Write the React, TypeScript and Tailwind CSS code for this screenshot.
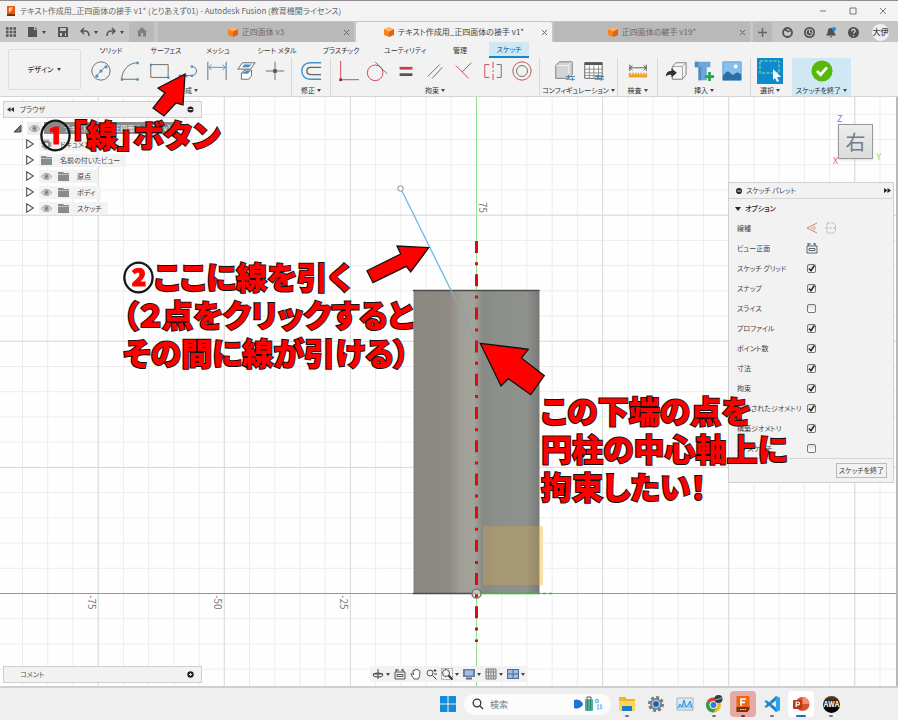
import React from 'react';

type P = { children: React.ReactNode; size?: string; box?: string };
const Svg = ({ children, size = 'size-6', box = '0 0 24 24' }: P) => (
  <svg viewBox={box} className={`${size} shrink-0`} fill="none" aria-hidden="true">{children}</svg>
);
const Caret = () => <span aria-hidden="true" className="ml-0.5 inline-block border-x-2 border-t-3 border-x-transparent border-t-[#444]" />;

/* ---------- title bar ---------- */
const TitleBar = () => (
  <header className="flex h-[21px] items-center border-t border-[#8f8b91] bg-[#f3f3f3] pl-1.5 text-[8px] text-[#666]">
    <Svg size="size-[10px]" box="0 0 10 10">
      <path d="M1 0h8v8l-1 2H1z" fill="#e85d0c" /><path d="M1 8h8v2H1z" fill="#7a2f08" /><path d="M3.7 6V2h3M3.7 4h2.3" stroke="#fff" />
    </Svg>
    <h1 className="ml-1 whitespace-nowrap">テキスト作成用_正四面体の接手 v1* (とりあえず01) - Autodesk Fusion (教育機関ライセンス)</h1>
    <div className="ml-auto flex">
      <button aria-label="最小化" className="flex w-[30px] justify-center"><Svg size="size-2" box="0 0 8 8"><path d="M1 4h6" stroke="#777" /></Svg></button>
      <button aria-label="最大化" className="flex w-[30px] justify-center"><Svg size="size-2" box="0 0 8 8"><path d="M1 1h6v6h-6z" stroke="#777" /></Svg></button>
      <button aria-label="閉じる" className="flex w-[30px] justify-center"><Svg size="size-2" box="0 0 8 8"><path d="m1 1 6 6m0-6-6 6" stroke="#777" /></Svg></button>
    </div>
  </header>
);

/* ---------- document tabs ---------- */
const Cube = () => (
  <Svg size="size-[10px]" box="0 0 10 10">
    <path d="m5 0 5 2-5 2.5L0 2z" fill="#ffb35c" /><path d="M0 2l5 2.5V10L0 8z" fill="#f58220" /><path d="m10 2-5 2.5V10l5-2z" fill="#e0640f" />
  </Svg>
);
const DocTab = ({ name, active }: { name: string; active?: boolean }) => (
  <div className={`relative flex h-full w-[196px] min-w-0 shrink items-center justify-center gap-1 rounded-t-xs text-[8px] ${active ? 'bg-[#f2f2f2] text-[#444]' : 'bg-[#b9b9b9] text-[#6a6a6a]'}`}>
    <Cube /><button className="whitespace-nowrap">{name}</button>
    <button aria-label={`${name} を閉じる`} className="absolute right-1"><Svg size="size-[7px]" box="0 0 7 7"><path d="m1 1 5 5m0-5-5 5" stroke="#666" /></Svg></button>
  </div>
);
const DocBar = () => (
  <nav className="flex h-[21px] items-end bg-[#c6c6c6] pt-px">
    <div className="flex h-full w-[129px] shrink-0 items-center pl-1.5 text-[#555]">
      <button aria-label="アプリ"><Svg size="size-[10px]" box="0 0 10 10"><path d="M0 1.5h10M0 5h10M0 8.500h10" stroke="#555" strokeWidth="2.400" strokeDasharray="2.600 1.100" /></Svg></button>
      <button aria-label="ファイル" className="ml-3 flex items-center gap-0.5"><Svg size="size-[10px]" box="0 0 10 10"><path d="M0 0h6v3h3v7H0z" fill="#555" /><path d="m7 0 2.500 2.300H7z" fill="#555" /></Svg><Caret /></button>
      <button aria-label="保存" className="ml-3"><Svg size="size-[10px]" box="0 0 10 10"><path d="M0 0h9l1 1v9H0z" fill="#555" /><path d="M2 1h6v3H2zM2 6h6v3H2z" fill="#c6c6c6" /><path d="M4 6h3v3H4z" fill="#555" /></Svg></button>
      <button aria-label="元に戻す" className="ml-3 flex items-center gap-0.5"><Svg size="size-[10px]" box="0 0 10 10"><path d="M4 1 1 4l3 3M1 4h4c3 0 4 2 4 5" stroke="#555" strokeWidth="1.500" /></Svg><Caret /></button>
      <button aria-label="やり直し" className="ml-2 flex items-center gap-0.5"><Svg size="size-[10px]" box="0 0 10 10"><path d="m6 1 3 3-3 3M9 4H5C2 4 1 6 1 9" stroke="#555" strokeWidth="1.500" /></Svg><Caret /></button>
    </div>
    <button aria-label="ホーム" className="mr-1 flex h-full w-[25px] shrink-0 items-center justify-center bg-[#b9b9b9]"><Svg size="size-[10px]" box="0 0 10 10"><path d="M5 0 0 5h1v4.500h3V6h2v3.500h3V5h1z" fill="#808080" /></Svg></button>
    <div className="flex h-full min-w-0 flex-1 gap-0.5">
      <DocTab name="正四面体 v3" /><DocTab name="テキスト作成用_正四面体の接手 v1*" active /><DocTab name="正四面体の継手 v19*" />
      <button aria-label="新規" className="ml-px flex h-full w-[19px] shrink-0 items-center justify-center bg-[#b9b9b9]"><Svg size="size-[9px]" box="0 0 9 9"><path d="M4.500 0v9M0 4.500h9" stroke="#666" strokeWidth="1.500" /></Svg></button>
    </div>
    <div className="flex h-full shrink-0 items-center gap-[11px] pr-[9px]">
      <button aria-label="拡張機能"><Svg size="size-[11px]" box="0 0 11 11"><circle cx="5.500" cy="5.500" r="4.500" stroke="#505050" strokeWidth="1.800" /><path d="M3 2.500c3 0 1 4 5.500 1M3 1v3" stroke="#505050" strokeWidth="1.500" /></Svg></button>
      <button aria-label="ジョブ"><Svg size="size-[11px]" box="0 0 11 11"><circle cx="5.500" cy="5.500" r="5.500" fill="#505050" /><circle cx="5.500" cy="5.500" r="3.400" stroke="#ccc" /><path d="M5.500 3v3h2" stroke="#ccc" /></Svg></button>
      <button aria-label="通知"><Svg size="size-[11px]" box="0 0 11 11"><path d="M5 1c3 0 3 2 3.500 5L10 8.500H0L1.500 6C2 3 2 1 5 1zM3.500 9.300h3L5 10.800z" fill="#505050" /><circle cx="8" cy="2" r="2" fill="#1793d1" /></Svg></button>
      <button aria-label="ヘルプ"><Svg size="size-[11px]" box="0 0 11 11"><circle cx="5.500" cy="5.500" r="5.500" fill="#505050" /><path d="M3.700 4.200c0-2.600 3.700-2.200 3.500 0-.1 1-1.700 1.200-1.700 2.400M5.500 8v1.200" stroke="#ddd" strokeWidth="1.200" /></Svg></button>
      <button className="ml-0.5 flex size-[17px] items-center justify-center rounded-full bg-[#f0f0f0] text-[8px] font-medium whitespace-nowrap text-[#444]">大伊</button>
    </div>
  </nav>
);

/* ---------- ribbon ---------- */
const B = '#3d93d0';
const G = '#666';
const R = '#c8404b';
const createIcons: [string, React.ReactNode][] = [
  ['円', <><circle cx="12" cy="12" r="10" stroke={G} /><path d="m7 17 10-10" stroke={B} /><path d="M6 16h3v3H6zM10.500 10.500h3v3h-3zM16 6h3v3h-3z" fill={B} /></>],
  ['円弧', <><path d="M3 21C3 11 11 3 20 3M3 21h18" stroke={G} /><path d="M2 20h2.500v2.500H2zM19 2h2.500v2.500H19zM19 20h2.500v2.500H19z" fill={B} /></>],
  ['長方形', <><path d="M3 5h19v14H3z" stroke={G} /><path d="M2 4h2.500v2.500H2zM21 18h2.500v2.500H21z" fill={B} /></>],
  ['線', <><path d="M2 17h14c7 0 7-10 0-10" stroke={G} /><path d="M2 16h2.500v2.500H2zM9 16h2.500v2.500H9zM15 16h2.500v2.500H15zM15 6h2.500v2.500H15z" fill={B} /></>],
  ['寸法', <><path d="M2 2v20M22 2v20" stroke={G} /><path d="M3 8h18M6 5 3 8l3 3M18 5l3 3-3 3" stroke={B} /></>],
  ['投影', <><path d="m8 3h14l-5 7H3z" stroke={G} /><path d="M10 5h8l-3 3H8z" fill={B} /><path d="M7 14l4-3h7v6l-3 4H7z" stroke={G} fill="#fff" /><path d="m8 14 4-2h5l-3 3H8z" fill={B} /></>],
  ['点', <><path d="M12 2v20M2 12h20" stroke={G} /><path d="M10 10h4v4h-4z" fill="#555" /></>],
];
const constraintIcons: [string, React.ReactNode][] = [
  ['水平/垂直', <><path d="M4 1v21" stroke={R} /><path d="M4 21.500h20" stroke={G} /><path d="M2.500 20h3v3h-3z" fill="#a22" /></>],
  ['接線', <><circle cx="10" cy="14" r="8.500" stroke={R} /><path d="m10 2 13 13" stroke={G} /></>],
  ['等しい', <><path d="M5 9h14" stroke={R} strokeWidth="3" /><path d="M5 16h14" stroke="#555" strokeWidth="3" /></>],
  ['平行', <><path d="M4 18 17 5" stroke={R} /><path d="M9 20 20 8" stroke={G} /></>],
  ['直交', <><path d="m3 6 14 14" stroke={R} /><path d="M10 13 20 3" stroke={G} /></>],
  ['対称', <><path d="M8 5H3v14h5" stroke={R} /><path d="M16 5h5v14h-5" stroke={G} /><path d="M12 2v20" stroke={R} strokeDasharray="7 2 2 2" /></>],
  ['同心円', <><circle cx="12" cy="12" r="10" stroke={R} /><circle cx="12" cy="12" r="6" stroke={G} /></>],
];
const slider = <path d="M14 18h10M14 21h10M17 16v4M21 19v4" stroke="#3c7fa8" />;
const configIcons: [string, React.ReactNode][] = [
  ['設定', <><path d="M3 6 7 2h14v14l-4 4H3z" fill="#d4d4d4" stroke="#777" /><path d="M3 6h14v14M17 6l4-4" stroke="#eee" />{slider}</>],
  ['設定表', <><path d="M3 3h19v17H3z" fill="#fff" stroke="#555" /><path d="M3 4h19" stroke="#555" strokeWidth="3" /><path d="M3 10h19M3 14h19M3 17h19M8 6v14M13 6v14M18 6v14" stroke="#888" />{slider}</>],
];
const inspectIcons: [string, React.ReactNode][] = [
  ['計測', <><path d="M3 5v7M21 5v7M3 8.500h18M6 6 3 8.500 6 11M18 6l3 2.500L18 11" stroke="#555" /><path d="M2 14h20v5H2z" fill="#eda224" /><path d="M5 14v2M8 14v2M11 14v2M14 14v2M17 14v2M20 14v2" stroke="#fff" /></>],
];
const insertIcons: [string, React.ReactNode][] = [
  ['派生', <><path d="m8 7 4-4h11v13l-4 5H8z" fill="#f6f6f6" stroke="#777" /><path d="M8 7h11v14M19 7l4-4" stroke="#999" /><path d="M1 18c0-5 3-6 6-6V9l6 5-6 5v-3c-3 0-4 0-6 2z" fill="#333" /></>],
  ['ファスナー', <><path d="M2 2h17v6H2zM6 8h9v14H6z" fill="#6ba7d8" /><path d="M6 8h3v14H6zM2 2h4v6H2z" fill="#4b8cc4" /><path d="M18 13v10M13 18h10" stroke="#28a745" strokeWidth="3" /></>],
  ['画像', <><path d="M2 2h20v20H2z" fill="#86c1ee" stroke="#5b9dcf" /><path d="M2 17c4-4 5-6 8-3 2 2 3 3 5 1 3-2 4-2 7 1v6H2z" fill="#2d6da3" /><circle cx="16" cy="7" r="2" fill="#fff" /></>],
];
const Group = ({ label, icons, w, cell }: { label: string; icons: [string, React.ReactNode][]; w: string; cell: string }) => (
  <section className={`flex shrink-0 flex-col items-center border-r border-[#d9d9d9] ${w}`}>
    <div className="flex h-[26px] items-center">
      {icons.map(([n, art]) => <button key={n} title={n} aria-label={n} className={`flex justify-center ${cell}`}><Svg size="size-[22px]">{art}</Svg></button>)}
    </div>
    <button className="flex h-3 items-center text-[7px] whitespace-nowrap">{label}<Caret /></button>
  </section>
);
const Ribbon = () => {
  const tabs: [string, string][] = [['ソリッド', 'w-[52px]'], ['サーフェス', 'w-[58px]'], ['メッシュ', 'w-[46px]'], ['シート メタル', 'w-[72px]'], ['プラスチック', 'w-[56px]'], ['ユーティリティ', 'w-[72px]'], ['管理', 'w-[38px]']];
  return (
    <div className="flex h-[55px] border-b border-[#d5d5d5] bg-[#f2f2f2] text-[#333]">
      <button className="mt-[7px] mr-1 ml-2 flex h-[41px] w-[73px] shrink-0 items-center justify-center gap-0.5 rounded-xs border border-[#dcdcdc] text-[7px] font-medium">デザイン<Caret /></button>
      <div className="flex min-w-0 flex-col">
        <div className="flex h-4 text-[7px]">
          {tabs.map(([t, w]) => <button key={t} className={`shrink-0 whitespace-nowrap ${w}`}>{t}</button>)}
          <button className="ml-[10px] w-10 shrink-0 border-b-2 border-[#1487c0] bg-[#cfe8f4] font-medium text-[#1482bb]">スケッチ</button>
        </div>
        <div className="flex">
          <Group label="作成" icons={createIcons} w="w-[207px]" cell="w-[29px]" />
          <Group label="修正" icons={[['オフセット', <><path d="M23 3H11C-1 3-1 21 11 21h12" stroke={B} strokeWidth="1.500" /><path d="M23 8H12c-6 0-6 8 0 8h11" stroke={G} strokeWidth="1.500" /></>]]} w="w-[39px]" cell="w-[29px]" />
          <Group label="拘束" icons={constraintIcons} w="w-[209px]" cell="w-[29px]" />
          <Group label="コンフィギュレーション" icons={configIcons} w="w-[78px]" cell="w-[29px]" />
          <Group label="検査" icons={inspectIcons} w="w-[40px]" cell="w-[29px]" />
          <Group label="挿入" icons={insertIcons} w="w-[93px]" cell="w-[28px]" />
          <section className="ml-[6px] flex w-[26px] shrink-0 flex-col items-center">
            <button aria-label="選択ツール" className="bg-[#0f8acb]"><Svg size="size-[26px]" box="0 0 26 26"><path d="M3 3h19v12H3z" stroke="#8fe0a8" strokeDasharray="3 1.500" /><path d="m16 11 8 8h-4l2 4-2 1-2-4-2 2z" fill="#fff" /></Svg></button>
            <button className="flex h-3 items-center text-[7px] whitespace-nowrap">選択<Caret /></button>
          </section>
          <button className="ml-[9px] flex h-[38px] w-[59px] shrink-0 flex-col items-center bg-[#cfe8f4] text-[7px]">
            <span className="flex h-[26px] items-center"><Svg size="size-[22px]"><circle cx="12" cy="12" r="11.500" fill="#57b90c" /><path d="m6.500 12 4 4 7-8" stroke="#fff" strokeWidth="3" /></Svg></span>
            <span className="flex h-3 items-center whitespace-nowrap">スケッチを終了<Caret /></span>
          </button>
        </div>
      </div>
    </div>
  );
};

/* ---------- drawing area ---------- */
const Drawing = () => (
  <svg className="absolute inset-0 size-full" aria-label="スケッチ キャンバス">
    <defs>
      <pattern id="minor" x="476" y="496" width="25.220" height="25.220" patternUnits="userSpaceOnUse"><path d="M.5 0v26M0 .5h26" stroke="#ececec" /></pattern>
      <pattern id="major" x="476" y="496" width="126.100" height="126.100" patternUnits="userSpaceOnUse"><path d="M.5 0v127M0 .5h127" stroke="#dadada" /></pattern>
      <linearGradient id="body"><stop offset="0" stopColor="#85857e" /><stop offset=".03" stopColor="#8b8880" /><stop offset=".28" stopColor="#8e8a83" /><stop offset=".38" stopColor="#a09f98" /><stop offset=".48" stopColor="#a3a29b" /><stop offset=".55" stopColor="#878b84" /><stop offset=".68" stopColor="#8c908a" /><stop offset=".9" stopColor="#8e918c" /><stop offset="1" stopColor="#767975" /></linearGradient>
      <linearGradient id="fade" x1="0" y1="0" x2="0" y2="1"><stop offset=".6" stopColor="#6db9e5" /><stop offset=".75" stopColor="#8fa5ae" /><stop offset="1" stopColor="#8f9a9c" /></linearGradient>
    </defs>
    <rect width="100%" height="100%" fill="#fefefe" />
    <rect width="100%" height="100%" fill="url(#minor)" /><rect width="100%" height="100%" fill="url(#major)" />
    <rect x="476" y="0" width="1" height="100%" fill="#8fe08f" />
    <rect x="0" y="496" width="100%" height="1" fill="#dd7777" />
    <rect x="413.500" y="193" width="126" height="304" fill="url(#body)" />
    <path d="M413 193.500h126.500M413 496.500h64" stroke="#4c4c4c" strokeWidth="1.500" />
    <rect x="483" y="429" width="60" height="59" fill="#f5ae35" fillOpacity=".25" /><path d="M541.500 429v59" stroke="#fbe0ac" strokeWidth="3" />
    <path d="M476 496.500h64M543 496.500h3M549 496.500h3" stroke="#27c427" strokeWidth="1.500" />
    <path d="M402 94 476 244" stroke="url(#fade)" strokeWidth="1.300" />
    <circle cx="400.500" cy="91.500" r="2.700" fill="#fff" stroke="#8a8a8a" />
    <circle cx="476.500" cy="496.500" r="4.500" fill="#ddd" fillOpacity=".6" stroke="#777" strokeWidth="1.500" />
    <g fill="#777" fontSize="10">
      <text transform="translate(479 105) rotate(90)">75</text><text transform="translate(88 498) rotate(90)">-75</text><text transform="translate(214 498) rotate(90)">-50</text><text transform="translate(340 498) rotate(90)">-25</text>
    </g>
  </svg>
);
const Folder = () => <Svg size="size-[11px]" box="0 0 11 11"><path d="M0 1h5l1 1h5v8H0z" fill="#8b8b8b" /><path d="M0 3.500h11" stroke="#bbb" /></Svg>;
const Eye = () => <Svg size="size-[11px]" box="0 0 11 11"><path d="M.5 5.500c2.500-4 7.500-4 10 0-2.500 4-7.500 4-10 0z" stroke="#999" fill="#ddd" /><circle cx="5.500" cy="5.500" r="2.200" fill="#888" /></Svg>;
const Row = ({ name, eye, gear }: { name: string; eye?: boolean; gear?: boolean }) => (
  <li className="flex h-4 items-center pl-[22px]">
    <button aria-label={`${name} を展開`} className="mr-1"><Svg size="size-[10px]" box="0 0 9 9"><path d="m1.500.7 6 3.800-6 3.800z" stroke="#555" /></Svg></button>
    <span className="flex h-[13px] items-center bg-[#f2f2f2] pr-[6px] pl-0.5">
      {eye && <span className="mr-[6px]"><Eye /></span>}
      {gear ? <Svg size="size-[11px]" box="0 0 11 11"><circle cx="5.500" cy="5.500" r="3" stroke="#888" strokeWidth="2.500" /><circle cx="5.500" cy="5.500" r="4.800" stroke="#888" strokeDasharray="2 1.800" /></Svg> : <Folder />}
      <span className="ml-[8px]">{name}</span>
    </span>
  </li>
);
const Browser = () => (
  <aside className="absolute top-1 left-[3px] w-[199px] text-[7px] text-[#444]">
    <div className="flex h-[17px] items-center border border-[#cfcfcf] bg-[#f2f2f2] px-[3px]">
      <button aria-label="折りたたむ"><Svg size="size-[7px]" box="0 0 7 7"><path d="M3.500 1v5L0 3.500zM7 1v5L3.500 3.500z" fill="#333" /></Svg></button>
      <h2 className="ml-1.5">ブラウザ</h2>
      <button aria-label="オプション" className="mr-1 ml-auto"><Svg size="size-[7px]" box="0 0 7 7"><circle cx="3.500" cy="3.500" r="3" fill="#222" /><path d="M1.500 3.500h4" stroke="#ddd" /></Svg></button>
    </div>
    <ul className="pt-0.5">
      <li className="flex h-4 items-center pl-[10px]"><Svg size="size-[9px]" box="0 0 9 9"><path d="M8 1v7H1z" fill="#777" stroke="#444" /></Svg>
        <span className="ml-[5px] flex h-[13px] items-center bg-[#ededed] px-0.5"><Eye /></span>
        <span className="ml-0.5 flex h-3 w-[134px] items-center bg-[#8a8a8a] pl-5 whitespace-nowrap text-white">テキスト作成用_正四面体の接手 v1</span>
      </li>
      <Row name="ドキュメントの設定" gear /><Row name="名前の付いたビュー" /><Row name="原点" eye /><Row name="ボディ" eye /><Row name="スケッチ" eye />
    </ul>
  </aside>
);
const Option = ({ name, on }: { name: string; on: boolean }) => (
  <label className="flex h-5 items-center pl-2">
    <span className="w-[70px] whitespace-nowrap">{name}</span>
    <span className="relative size-[9px]">
      <input type="checkbox" defaultChecked={on} className="peer block size-[9px] appearance-none rounded-xs border border-[#777] bg-linear-to-b from-[#ddd] to-white" />
      <svg viewBox="0 0 9 9" className="absolute inset-0 hidden size-[9px] peer-checked:block" fill="none" aria-hidden="true"><path d="m2 4.500 2 2.300L7.300 1.500" stroke="#222" strokeWidth="1.500" /></svg>
    </span>
  </label>
);
const Palette = () => (
  <aside className="absolute top-[85px] right-[2px] w-[166px] border border-[#d0d0d0] bg-[#f2f2f2] text-[7px] text-[#444]">
    <div className="flex h-4 items-center gap-1 border-b border-[#d5d5d5] px-[7px] pr-0.5">
      <Svg size="size-[6px]" box="0 0 6 6"><circle cx="3" cy="3" r="3" fill="#222" /><path d="M1 3h4" stroke="#ddd" /></Svg>
      <h2>スケッチ パレット</h2>
      <button aria-label="折りたたむ" className="ml-auto"><Svg size="size-[7px]" box="0 0 7 7"><path d="M0 1v5l3.500-2.500zM3.500 1v5L7 3.500z" fill="#222" /></Svg></button>
    </div>
    <button className="flex h-[19px] items-center gap-1 pl-[6px] font-medium text-[#222]"><Svg size="size-[6px]" box="0 0 6 6"><path d="M0 1h6L3 5z" fill="#222" /></Svg>オプション</button>
    <div className="flex h-5 items-center pl-2"><span className="w-[69px]">線種</span>
      <button aria-label="コンストラクション"><Svg size="size-3" box="0 0 12 12"><path d="M11 1 1 6l10 5" stroke="#c98e72" /><path d="M8 3.500v6M5 6h5" stroke="#d79b7f" strokeDasharray="2 1" /></Svg></button>
      <button aria-label="中心線" className="ml-[7px]"><Svg size="size-3" box="0 0 12 12"><path d="M2 1h6l2.500 2v6L8 11H2zM0 6h11" stroke="#bbb" strokeDasharray="3 1" /></Svg></button>
    </div>
    <div className="flex h-5 items-center pl-2"><span className="w-[69px]">ビュー正面</span><button aria-label="ビュー正面"><Svg size="size-3" box="0 0 12 12"><path d="M1 4h10v7H1zM3 6.500h6v2H3zM2 4l1-3M10 4 8 1M1 2h4M7 2h3" stroke="#5c6674" /></Svg></button></div>
    <Option name="スケッチ グリッド" on /><Option name="スナップ" on /><Option name="スライス" on={false} /><Option name="プロファイル" on /><Option name="ポイント数" on /><Option name="寸法" on /><Option name="拘束" on /><Option name="投影されたジオメトリ" on /><Option name="構築ジオメトリ" on /><Option name="3D スケッチ" on={false} />
    <div className="flex h-[24px] items-center justify-end border-t border-[#d5d5d5] pr-[6px]"><button className="h-[15px] w-[51px] border border-[#bbb] whitespace-nowrap">スケッチを終了</button></div>
  </aside>
);
const ViewCube = () => (
  <div className="absolute top-[14px] right-[15px] h-[54px] w-[50px] text-[9px]">
    <span className="absolute top-[3px] left-[6px] text-[#7777f2]">Z</span>
    <span className="absolute right-0 bottom-1 text-[#76e476]">Y</span>
    <button className="absolute top-[13px] left-[7px] flex size-[35px] items-center justify-center border border-[#999] bg-linear-to-b from-[#eceeee] to-[#dadcdd] text-xl text-[#777b80] shadow-sm">右</button>
    <span className="absolute bottom-0 left-0.5 text-[#ee6666]">X</span>
  </div>
);
const navIcons: [string, boolean, React.ReactNode][] = [
  ['オービット', true, <><path d="M6 1v10M1 6h10" stroke="#444" /><ellipse cx="6" cy="7" rx="5" ry="2" stroke="#444" /></>],
  ['ビュー', false, <><path d="M1 4h10v7H1zM3 6.500h6v2H3zM2 4l1-3M10 4 8 1M1 2h4M7 2h3" stroke="#555" /></>],
  ['画面移動', false, <path d="M4 11C3 9 1 7 1 6s1-1 2.500 1L3 3c0-1 1-1 1.500 0L5 1.500c.5-1 1.300-.5 1.300 0L7 1.500c1-.5 1.300 0 1.300 1 1-.3 1.500 0 1.500 1 0 3 0 5-1.500 7.500z" stroke="#555" fill="#fff" />],
  ['ズーム', false, <><circle cx="4" cy="5" r="3" stroke="#555" /><path d="m6.500 7.500 4 4M9 1v3M7.500 2.500h3M8 6h3" stroke="#444" /></>],
  ['窓ズーム', true, <><path d="M.5.5h11v11H.5z" stroke="#999" strokeDasharray="2 1" /><circle cx="5" cy="5" r="3.500" stroke="#456" fill="#f2f2f2" /><path d="m7.500 7.500 4 4" stroke="#333" strokeWidth="2" /></>],
  ['表示設定', true, <><path d="M0 1h12v8H0z" fill="#6d7f99" /><path d="M2 2.500h8v5H2z" fill="#9dc0e8" /><path d="M3 10.500h6" stroke="#667" strokeWidth="2" /></>],
  ['グリッド', true, <><path d="M1 1h10v10H1z" fill="#ddd" stroke="#777" /><path d="M3.500 1v10M6 1v10M8.500 1v10M1 4h10M1 8h10" stroke="#888" /></>],
  ['ビューポート', true, <><path d="M0 1h12v10H0z" fill="#4e6c93" /><path d="M1 2h4.500v3.500H1zM6.500 2H11v3.500H6.500zM1 6.500h4.500V10H1zM6.500 6.500H11V10H6.500z" fill="#9dbce2" /></>],
];
const Canvas = () => (
  <main className="relative min-h-[588px] flex-1 overflow-hidden border-r-2 border-[#b8b8b8]">
    <Drawing /><Browser /><ViewCube /><Palette />
    <div className="absolute bottom-[3px] left-[3px] flex h-[17px] w-[199px] items-center border border-[#cfcfcf] bg-[#f2f2f2] pl-4 text-[7px] text-[#555]">コメント
      <button aria-label="コメントを追加" className="mr-[7px] ml-auto"><Svg size="size-[7px]" box="0 0 7 7"><circle cx="3.500" cy="3.500" r="3.200" fill="#222" /><path d="M2 3.500h3M3.500 2v3" stroke="#ddd" /></Svg></button>
    </div>
    <div className="absolute bottom-1 left-[370px] flex h-4 w-[157px] items-center justify-between bg-[#f2f2f2] px-0.5">
      {navIcons.map(([n, c, a]) => <button key={n} aria-label={n} className="flex items-center"><Svg size="size-3" box="0 0 12 12">{a}</Svg>{c && <Caret />}</button>)}
    </div>
  </main>
);

/* ---------- taskbar ---------- */
const Task = ({ name, children, bg = '', mark = '' }: { name: string; children: React.ReactNode; bg?: string; mark?: string }) => (
  <button aria-label={name} className={`relative flex h-[26px] w-[26px] items-center justify-center rounded-sm ${bg}`}>
    <Svg size="size-[18px]" box="0 0 18 18">{children}</Svg>
    {mark && <span className={`absolute bottom-0 h-0.5 rounded-full ${mark}`} />}
  </button>
);
const dot = 'w-1 bg-[#777]';
const Taskbar = () => (
  <footer className="flex h-[34px] items-center border-t-2 border-[#cfcfcf] bg-[#efefef] pl-[435px]">
    <div className="flex items-center gap-[3px]">
      <Task name="スタート"><path d="M1 1h7.500v7.500H1zM9.500 1H17v7.500H9.500zM1 9.500h7.500V17H1zM9.500 9.500H17V17H9.500z" fill="#138bd8" /></Task>
      <label className="flex h-[21px] w-[147px] items-center gap-1.5 rounded-full bg-[#fcfcfc] px-2">
        <Svg size="size-3" box="0 0 12 12"><circle cx="5" cy="5" r="3.800" stroke="#333" strokeWidth="1.300" /><path d="m8 8 3 3" stroke="#333" strokeWidth="1.300" /></Svg>
        <input type="search" aria-label="検索" placeholder="検索" className="w-16 flex-1 text-[9px] outline-none placeholder:text-[#777]" />
        <Svg size="h-4 w-[30px]" box="0 0 30 16"><path d="M1 4c4-2 9 2 9 4s-5 6-9 4z" fill="#1d74d8" /><path d="M14 3V1h4v2" stroke="#555" /><rect x="12" y="3" width="8" height="12" rx="1" fill="#52ae9b" /><path d="M14.500 4v10M17.500 4v10" stroke="#2e8273" /><circle cx="24" cy="5" r="1.500" stroke="#78c4ec" strokeWidth="1.500" /><circle cx="26.500" cy="11" r="2" stroke="#78c4ec" strokeWidth="2" strokeDasharray="2 1" /></Svg>
      </label>
      <Task name="エクスプローラー" mark={dot}><path d="M1 2h6l2 2h8v12H1z" fill="#f2b51d" /><path d="M1 6h16v10H1z" fill="#ffd45a" /><path d="M4 16v-5h10v5z" fill="#177fc9" /></Task>
      <Task name="設定"><circle cx="9" cy="9" r="6" fill="#7a8794" /><circle cx="9" cy="9" r="6.700" stroke="#6d7985" strokeWidth="2.600" strokeDasharray="3 2.250" /><circle cx="9" cy="9" r="3.500" fill="#1f5da0" stroke="#dce8f2" /></Task>
      <Task name="モニター"><path d="M1 3h16v12H1z" fill="#d6eaf7" stroke="#9fb5c5" /><path d="M2 13 4 9l2 3 2-7 2 7 2-2 2-4 2 7" stroke="#3590cc" fill="#9bcdef" /></Task>
      <Task name="Chrome" mark={dot}><circle cx="8.500" cy="10" r="7.500" fill="#e9b920" /><path d="M8.500 10 2 6.250a7.500 7.500 0 0 1 13 0z" fill="#dd4335" /><path d="M8.500 10 2 6.250A7.500 7.500 0 0 0 8.500 17.500l3-5z" fill="#2f9e50" /><circle cx="8.500" cy="10" r="3.600" fill="#2e7ce6" stroke="#fff" /><circle cx="13.500" cy="4" r="4" fill="#333e49" /><path d="m10 5 7-2" stroke="#9db6c6" /></Task>
      <Task name="Fusion" bg="bg-[#e5a9a6]" mark="w-1 bg-[#8c2a16]"><path d="M2.500 1h13v13l-2 3h-11z" fill="#ef660e" /><path d="M2.500 12h13v2l-2 3h-11z" fill="#7d3010" /><path d="M7 11V4h5M7 7.300h4" stroke="#fff" strokeWidth="1.700" /><path d="M6 14.500h6" stroke="#ddd" strokeDasharray="1.500 .8" /></Task>
      <Task name="VS Code" mark={dot}><path d="M13 1 17 3v12l-4 2L1.500 6.500 3 5l10 7.500z" fill="#1d87cc" /><path d="M13 1v4.500L3 13l-1.500-1.500z" fill="#2386c8" /><path d="m13 1 4 2v12l-4 2z" fill="#2aa3ee" /></Task>
      <Task name="PowerPoint" bg="bg-white" mark="w-2.5 bg-[#1470c8]"><circle cx="10.500" cy="9" r="7" fill="#d35230" /><path d="M10.500 2a7 7 0 0 1 7 7h-7z" fill="#f49072" /><rect x="1" y="5" width="9" height="9" rx="1" fill="#b9371d" /><path d="M4.200 12V7h1.500c2.500 0 2.500 2.800 0 2.800H4.200" stroke="#fff" strokeWidth="1.200" /></Task>
      <button aria-label="AWA" className="relative ml-1.5 flex h-[26px] items-center"><span className="flex size-[17px] items-center justify-center rounded-full bg-linear-to-b from-[#5d4423] to-black text-[7px] font-bold text-white">AWA</span><span className="absolute bottom-0 left-1.5 h-0.5 w-1 rounded-full bg-[#777]" /></button>
    </div>
  </footer>
);

/* ---------- slide annotations over the whole window ---------- */
const Num = ({ children }: { children: string }) => (
  <span className="bg-[radial-gradient(circle_at_50%_54%,#f00_11px,#111_12px)] bg-clip-text text-transparent [-webkit-text-stroke:1px_transparent]">{children}</span>
);
const note = 'absolute whitespace-nowrap text-[31px] leading-[38px] font-black text-[#ff0000] [-webkit-text-stroke:2px_#111] [paint-order:stroke_fill]';
const Notes = () => (
  <div className="pointer-events-none absolute inset-0 overflow-hidden">
    <svg className="absolute inset-0 size-full" aria-hidden="true">
      <path d="M476.500 241v401" stroke="#dd0c12" strokeWidth="3" strokeDasharray="12 9.200 3 9" />
      <g fill="#ff0000" stroke="#111" strokeWidth="1.300">
        <path d="m185 74-27 14 7 5-12 15 11 8 12-13 7 2z" />
        <path d="m428.700 247.700-31.700-1.700 3.700 8-33.700 16.700 6 12 33.300-16.400 4.400 5.700z" />
        <path d="m480.300 343.300 48 6-7 8.700 23 17.700-13.600 19-22.400-16-7.300 7.300z" />
      </g>
    </svg>
    <p className={`${note} top-[115px] left-[40px]`}><Num>①</Num>「線」ボタン</p>
    <p className={`${note} top-[257px] left-[123px]`}><Num>②</Num>ここに線を引く<br />（２点をクリックすると<br />その間に線が引ける）</p>
    <p className={`${note} top-[391px] left-[541px]`}>この下端の点を<br />円柱の中心軸上に<br />拘束したい！</p>
  </div>
);

export default function App() {
  return (
    <div lang="ja" className="relative flex min-h-screen flex-col overflow-hidden bg-[#f2f2f2] font-['Noto_Sans_CJK_JP','Noto_Sans',sans-serif] leading-none [font-feature-settings:'palt']">
      <TitleBar /><DocBar /><Ribbon /><Canvas /><Taskbar /><Notes />
    </div>
  );
}
